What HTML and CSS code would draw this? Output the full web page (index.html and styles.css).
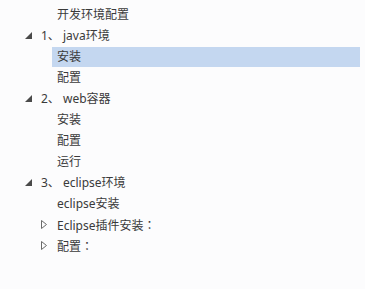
FILE: index.html
```html
<!DOCTYPE html>
<html>
<head>
<meta charset="utf-8">
<link rel="stylesheet" href="styles.css">
</head>
<body>
<ul class="tree">
  <li class="row lvl2"><span class="tog"></span><span class="label">开发环境配置</span></li>
  <li class="row lvl1"><span class="tog"><svg width="7" height="7" viewBox="0 0 7 7"><path d="M7 0V7H0Z" fill="#4a4a4a"/></svg></span><span class="label">1、 java环境</span></li>
  <li class="row lvl2"><span class="tog"></span><span class="label sel">安装</span></li>
  <li class="row lvl2"><span class="tog"></span><span class="label">配置</span></li>
  <li class="row lvl1"><span class="tog"><svg width="7" height="7" viewBox="0 0 7 7"><path d="M7 0V7H0Z" fill="#4a4a4a"/></svg></span><span class="label">2、 web容器</span></li>
  <li class="row lvl2"><span class="tog"></span><span class="label">安装</span></li>
  <li class="row lvl2"><span class="tog"></span><span class="label">配置</span></li>
  <li class="row lvl2"><span class="tog"></span><span class="label">运行</span></li>
  <li class="row lvl1"><span class="tog"><svg width="7" height="7" viewBox="0 0 7 7"><path d="M7 0V7H0Z" fill="#4a4a4a"/></svg></span><span class="label">3、 eclipse环境</span></li>
  <li class="row lvl2"><span class="tog"></span><span class="label">eclipse安装</span></li>
  <li class="row lvl2"><span class="tog"><svg width="6" height="9" viewBox="0 0 6 9"><path d="M0.5 0.5V8.5L5.5 4.5Z" fill="none" stroke="#6a6a6a" stroke-width="1"/></svg></span><span class="label">Eclipse插件安装<span class="colon">：</span></span></li>
  <li class="row lvl2"><span class="tog"><svg width="6" height="9" viewBox="0 0 6 9"><path d="M0.5 0.5V8.5L5.5 4.5Z" fill="none" stroke="#6a6a6a" stroke-width="1"/></svg></span><span class="label">配置<span class="colon">：</span></span></li>
</ul>
</body>
</html>
```
FILE: styles.css
```css
html, body {
  margin: 0;
  padding: 0;
  background: #fcfcfd;
}
body {
  font-family: "Noto Sans", "Noto Sans CJK SC", sans-serif;
  font-size: 12px;
  color: #3a3a3a;
  padding-top: 4px;
}
.tree {
  list-style: none;
  margin: 0;
  padding: 0 5px 0 0;
}
.row {
  display: flex;
  align-items: center;
  height: 21px;
}
.lvl1 { padding-left: 20px; }
.lvl2 { padding-left: 36px; }
.tog {
  width: 16px;
  height: 21px;
  display: flex;
  align-items: center;
  justify-content: center;
  flex: none;
}
.label {
  flex: 1;
  height: 20px;
  line-height: 20px;
  padding-left: 5px;
  white-space: pre;
}
.colon {
  font-family: "Noto Sans CJK TC", sans-serif;
}
.sel {
  background: #c4d7f0;
}
```
